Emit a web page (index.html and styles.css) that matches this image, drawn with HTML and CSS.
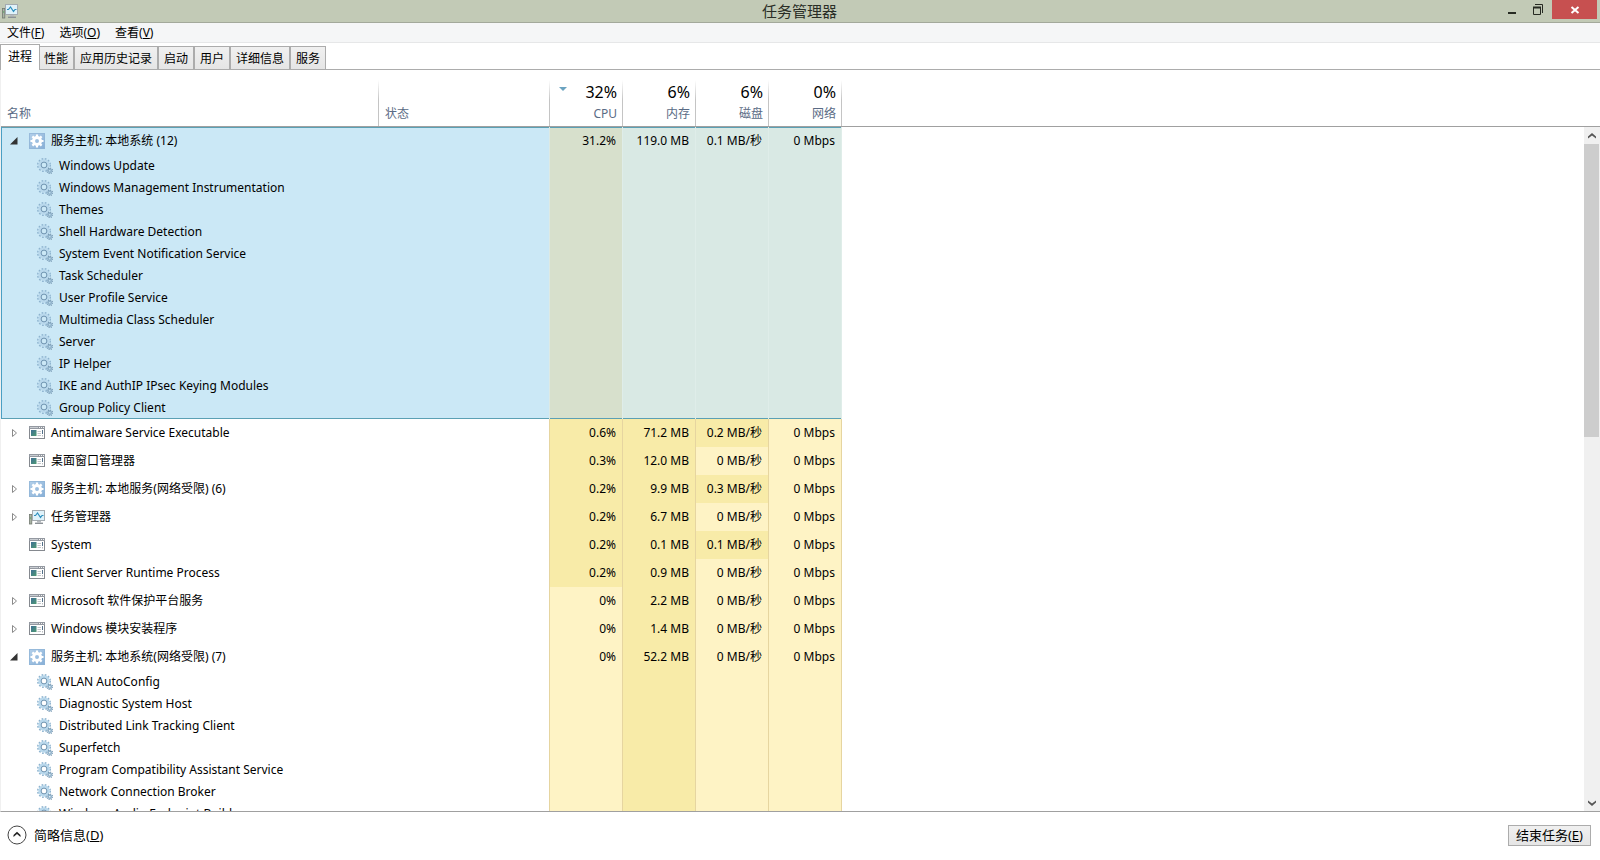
FILE: index.html
```html
<!DOCTYPE html>
<html lang="zh-CN">
<head>
<meta charset="utf-8">
<title>任务管理器</title>
<link rel="stylesheet" href="styles.css">
</head>
<body>
<svg class="defs" aria-hidden="true">
  <defs>
    <linearGradient id="blue" x1="0" y1="0" x2="1" y2="1"><stop offset="0" stop-color="#b3d0ea"/><stop offset="1" stop-color="#86aed6"/></linearGradient>
    <linearGradient id="pane" x1="0" y1="0" x2="1" y2="1"><stop offset="0" stop-color="#3f6f96"/><stop offset="1" stop-color="#4e9a72"/></linearGradient>
  </defs>
  <symbol id="host" viewBox="0 0 16 16">
    <rect width="16" height="16" fill="url(#blue)"/>
    <rect x=".5" y=".5" width="15" height="15" fill="none" stroke="#8fb3d6" stroke-opacity=".7"/>
    <circle cx="8" cy="8" r="3.500" fill="none" stroke="#fff" stroke-width="3"/>
    <path d="M8 1.500v3m0 7v3M1.500 8h3m7 0h3M3.400 3.400l2 2m5.200 5.200l2 2M12.600 3.400l-2 2m-5.200 5.200l-2 2" stroke="#fff" stroke-width="2.200"/>
  </symbol>
  <symbol id="gears" viewBox="0 0 16 16">
    <circle cx="7" cy="7" r="6.200" fill="none" stroke="#8db3cf" stroke-width="1.600" stroke-dasharray="1.700 1.550"/>
    <circle cx="7" cy="7" r="4.300" fill="none" stroke="#b9d8ec" stroke-width="2.800"/>
    <circle cx="7" cy="7" r="2.900" fill="none" stroke="#6f93b0" stroke-width="1"/>
    <circle cx="12.800" cy="12.800" r="1.500" fill="none" stroke="#8fb2cb" stroke-width="1.500"/>
    <circle cx="12.800" cy="12.800" r="2.700" fill="none" stroke="#7899b3" stroke-width="1.200" stroke-dasharray="1.100 1.020"/>
  </symbol>
  <symbol id="app" viewBox="0 0 16 16">
    <rect x=".5" y="1.500" width="15" height="12" fill="#fff" stroke="#85898f"/>
    <path d="M0 1h16v3H0z" fill="#9499a1"/>
    <path d="M1 2.500h8" stroke="#c9cdd2"/>
    <path d="M10 2.500h1m1 0h1m1 0h1" stroke="#f4f4f4"/>
    <rect x="2" y="5" width="5.500" height="6" fill="url(#pane)"/>
    <path d="M8.500 6.500h3.500m-3.500 2h3.500m-3.500 2h3.500" stroke="#c3c7cb"/>
    <path d="M13.500 5v4" stroke="#54718a"/><path d="M13.500 10v1.500" stroke="#b9bdc1"/>
  </symbol>
  <symbol id="monitor" viewBox="0 0 16 16">
    <rect x=".4" y="5.500" width="2.400" height="9.500" fill="#a9b3a4" stroke="#737b72" stroke-width=".8"/>
    <path d="M1 9h1.200" stroke="#4da35a"/>
    <rect x="3.500" y="1.500" width="12" height="10" fill="#dff2fa" stroke="#a4abb0"/>
    <path d="M5 6.500h1.500L8.500 4l3 4.500L13 6.500h1.500" fill="none" stroke="#2d8fbd" stroke-width="1.200"/>
    <path d="M8 12h4v1.500H8z" fill="#b6bbbf"/><path d="M6 14.300h8" stroke="#8b9196" stroke-width="1.400"/>
  </symbol>
</svg>

<div class="window">
  <header class="titlebar">
    <svg class="icon"><use href="#monitor"/></svg>
    <h1>任务管理器</h1>
    <div class="controls">
      <button class="ctl" type="button" aria-label="最小化"><svg width="12" height="12"><path d="M2 8h8v2H2z"/></svg></button>
      <button class="ctl" type="button" aria-label="还原"><svg width="12" height="12"><path d="M.5 3.500h7v7h-7z" fill="none" stroke="#262a22"/><path d="M0 2.500h8v2H0z"/><path d="M2 .5h7.500V9" fill="none" stroke="#262a22"/></svg></button>
      <button class="ctl close" type="button" aria-label="关闭"><svg width="10" height="10"><path d="M1.500 2l7 6m0-6l-7 6" stroke="#fff" stroke-width="2"/></svg></button>
    </div>
  </header>

  <nav class="menubar">
    <button type="button">文件(<u>F</u>)</button>
    <button type="button">选项(<u>O</u>)</button>
    <button type="button">查看(<u>V</u>)</button>
  </nav>

  <div class="tabs" role="tablist">
    <button type="button" role="tab" class="tab active" aria-selected="true">进程</button>
    <button type="button" role="tab" class="tab">性能</button>
    <button type="button" role="tab" class="tab">应用历史记录</button>
    <button type="button" role="tab" class="tab">启动</button>
    <button type="button" role="tab" class="tab">用户</button>
    <button type="button" role="tab" class="tab">详细信息</button>
    <button type="button" role="tab" class="tab">服务</button>
  </div>

  <main class="list">
    <div class="tablewrap">
    <table>
      <colgroup><col class="c-name"><col class="c-status"><col class="c-num"><col class="c-num"><col class="c-num"><col class="c-num"><col></colgroup>
      <thead>
        <tr>
          <th scope="col">名称</th><th scope="col">状态</th>
          <th scope="col"><svg class="sort" width="8" height="4"><path d="M0 0h8L4 4z" fill="#6ba3c0"/></svg><b>32%</b>CPU</th>
          <th scope="col"><b>6%</b>内存</th><th scope="col"><b>6%</b>磁盘</th><th scope="col"><b>0%</b>网络</th><td></td>
        </tr>
      </thead>
      <tbody class="selected">
        <tr class="proc"><td><div class="name"><svg class="arrow"><path d="M7.500 0v7.500H0z" fill="#333"/></svg><svg class="icon"><use href="#host"/></svg>服务主机: 本地系统 (12)</div></td><td></td><td>31.2%</td><td>119.0 MB</td><td>0.1 MB/秒</td><td>0 Mbps</td><td></td></tr>
        <tr class="svc"><td><div class="name"><svg class="icon"><use href="#gears"/></svg>Windows Update</div></td><td></td><td></td><td></td><td></td><td></td><td></td></tr>
        <tr class="svc"><td><div class="name"><svg class="icon"><use href="#gears"/></svg>Windows Management Instrumentation</div></td><td></td><td></td><td></td><td></td><td></td><td></td></tr>
        <tr class="svc"><td><div class="name"><svg class="icon"><use href="#gears"/></svg>Themes</div></td><td></td><td></td><td></td><td></td><td></td><td></td></tr>
        <tr class="svc"><td><div class="name"><svg class="icon"><use href="#gears"/></svg>Shell Hardware Detection</div></td><td></td><td></td><td></td><td></td><td></td><td></td></tr>
        <tr class="svc"><td><div class="name"><svg class="icon"><use href="#gears"/></svg>System Event Notification Service</div></td><td></td><td></td><td></td><td></td><td></td><td></td></tr>
        <tr class="svc"><td><div class="name"><svg class="icon"><use href="#gears"/></svg>Task Scheduler</div></td><td></td><td></td><td></td><td></td><td></td><td></td></tr>
        <tr class="svc"><td><div class="name"><svg class="icon"><use href="#gears"/></svg>User Profile Service</div></td><td></td><td></td><td></td><td></td><td></td><td></td></tr>
        <tr class="svc"><td><div class="name"><svg class="icon"><use href="#gears"/></svg>Multimedia Class Scheduler</div></td><td></td><td></td><td></td><td></td><td></td><td></td></tr>
        <tr class="svc"><td><div class="name"><svg class="icon"><use href="#gears"/></svg>Server</div></td><td></td><td></td><td></td><td></td><td></td><td></td></tr>
        <tr class="svc"><td><div class="name"><svg class="icon"><use href="#gears"/></svg>IP Helper</div></td><td></td><td></td><td></td><td></td><td></td><td></td></tr>
        <tr class="svc"><td><div class="name"><svg class="icon"><use href="#gears"/></svg>IKE and AuthIP IPsec Keying Modules</div></td><td></td><td></td><td></td><td></td><td></td><td></td></tr>
        <tr class="svc"><td><div class="name"><svg class="icon"><use href="#gears"/></svg>Group Policy Client</div></td><td></td><td></td><td></td><td></td><td></td><td></td></tr>
      </tbody>
      <tbody>
        <tr class="proc"><td><div class="name"><svg class="arrow"><path d="M2.500 .5v7L6.500 4z" fill="#fff" stroke="#8a8a8a"/></svg><svg class="icon"><use href="#app"/></svg>Antimalware Service Executable</div></td><td></td><td class="hot">0.6%</td><td>71.2 MB</td><td class="hot">0.2 MB/秒</td><td>0 Mbps</td><td></td></tr>
        <tr class="proc"><td><div class="name"><svg class="arrow"></svg><svg class="icon"><use href="#app"/></svg>桌面窗口管理器</div></td><td></td><td class="hot">0.3%</td><td>12.0 MB</td><td>0 MB/秒</td><td>0 Mbps</td><td></td></tr>
        <tr class="proc"><td><div class="name"><svg class="arrow"><path d="M2.500 .5v7L6.500 4z" fill="#fff" stroke="#8a8a8a"/></svg><svg class="icon"><use href="#host"/></svg>服务主机: 本地服务(网络受限) (6)</div></td><td></td><td class="hot">0.2%</td><td>9.9 MB</td><td class="hot">0.3 MB/秒</td><td>0 Mbps</td><td></td></tr>
        <tr class="proc"><td><div class="name"><svg class="arrow"><path d="M2.500 .5v7L6.500 4z" fill="#fff" stroke="#8a8a8a"/></svg><svg class="icon"><use href="#monitor"/></svg>任务管理器</div></td><td></td><td class="hot">0.2%</td><td>6.7 MB</td><td>0 MB/秒</td><td>0 Mbps</td><td></td></tr>
        <tr class="proc"><td><div class="name"><svg class="arrow"></svg><svg class="icon"><use href="#app"/></svg>System</div></td><td></td><td class="hot">0.2%</td><td>0.1 MB</td><td class="hot">0.1 MB/秒</td><td>0 Mbps</td><td></td></tr>
        <tr class="proc"><td><div class="name"><svg class="arrow"></svg><svg class="icon"><use href="#app"/></svg>Client Server Runtime Process</div></td><td></td><td class="hot">0.2%</td><td>0.9 MB</td><td>0 MB/秒</td><td>0 Mbps</td><td></td></tr>
        <tr class="proc"><td><div class="name"><svg class="arrow"><path d="M2.500 .5v7L6.500 4z" fill="#fff" stroke="#8a8a8a"/></svg><svg class="icon"><use href="#app"/></svg>Microsoft 软件保护平台服务</div></td><td></td><td>0%</td><td>2.2 MB</td><td>0 MB/秒</td><td>0 Mbps</td><td></td></tr>
        <tr class="proc"><td><div class="name"><svg class="arrow"><path d="M2.500 .5v7L6.500 4z" fill="#fff" stroke="#8a8a8a"/></svg><svg class="icon"><use href="#app"/></svg>Windows 模块安装程序</div></td><td></td><td>0%</td><td>1.4 MB</td><td>0 MB/秒</td><td>0 Mbps</td><td></td></tr>
        <tr class="proc"><td><div class="name"><svg class="arrow"><path d="M7.500 0v7.500H0z" fill="#333"/></svg><svg class="icon"><use href="#host"/></svg>服务主机: 本地系统(网络受限) (7)</div></td><td></td><td>0%</td><td>52.2 MB</td><td>0 MB/秒</td><td>0 Mbps</td><td></td></tr>
        <tr class="svc"><td><div class="name"><svg class="icon"><use href="#gears"/></svg>WLAN AutoConfig</div></td><td></td><td></td><td></td><td></td><td></td><td></td></tr>
        <tr class="svc"><td><div class="name"><svg class="icon"><use href="#gears"/></svg>Diagnostic System Host</div></td><td></td><td></td><td></td><td></td><td></td><td></td></tr>
        <tr class="svc"><td><div class="name"><svg class="icon"><use href="#gears"/></svg>Distributed Link Tracking Client</div></td><td></td><td></td><td></td><td></td><td></td><td></td></tr>
        <tr class="svc"><td><div class="name"><svg class="icon"><use href="#gears"/></svg>Superfetch</div></td><td></td><td></td><td></td><td></td><td></td><td></td></tr>
        <tr class="svc"><td><div class="name"><svg class="icon"><use href="#gears"/></svg>Program Compatibility Assistant Service</div></td><td></td><td></td><td></td><td></td><td></td><td></td></tr>
        <tr class="svc"><td><div class="name"><svg class="icon"><use href="#gears"/></svg>Network Connection Broker</div></td><td></td><td></td><td></td><td></td><td></td><td></td></tr>
        <tr class="svc"><td><div class="name"><svg class="icon"><use href="#gears"/></svg>Windows Audio Endpoint Builder</div></td><td></td><td></td><td></td><td></td><td></td><td></td></tr>
      </tbody>
    </table>
    </div>
    <div class="scrollbar">
      <button type="button" aria-label="向上滚动"><svg width="8" height="6"><path d="M0 5.500V3.500L4 0l4 3.500v2L4 2.500z" fill="#555"/></svg></button>
      <div class="track"><div class="thumb"></div></div>
      <button type="button" aria-label="向下滚动"><svg width="8" height="6"><path d="M0 .5v2L4 6l4-3.500v-2L4 3.500z" fill="#555"/></svg></button>
    </div>
  </main>

  <footer class="footer">
    <button class="fewer" type="button"><svg width="20" height="20"><circle cx="10" cy="10" r="9" fill="#fff" stroke="#444"/><path d="M6.500 12V10L10 6.800l3.500 3.200v2L10 9z" fill="#222"/></svg><span>简略信息(<u>D</u>)</span></button>
    <button class="end" type="button">结束任务(<u>E</u>)</button>
  </footer>
</div>
</body>
</html>
```

FILE: styles.css
```css
* { box-sizing: border-box; }

body {
  margin: 0;
  font-family: "Noto Sans", "Noto Sans CJK SC", sans-serif;
  font-size: 12px;
  line-height: 18px;
  color: #000;
  background: #fff;
}

button {
  margin: 0;
  padding: 0;
  border: 0;
  background: none;
  font: inherit;
  color: inherit;
  white-space: nowrap;
}

svg { display: block; flex: none; }
.defs { position: absolute; width: 0; height: 0; }
.icon { width: 16px; height: 16px; }

.window {
  display: flex;
  flex-direction: column;
  height: 100vh;
  overflow: hidden;
}

/* Title bar */
.titlebar {
  display: grid;
  grid-template-columns: 1fr auto 1fr;
  align-items: center;
  flex: none;
  height: 23px;
  padding: 0 3px 0 2px;
  background: #c2cab6;
  border-bottom: 1px solid #a3a99b;
}
.titlebar h1 {
  margin: 0;
  font-size: 15px;
  line-height: 22px;
  font-weight: 400;
  color: #2a2e26;
}
.controls {
  display: flex;
  align-self: start;
  justify-content: flex-end;
}
.ctl {
  display: flex;
  align-items: center;
  justify-content: center;
  width: 27px;
  height: 19px;
}
.ctl path { fill: #262a22; }
.ctl path[fill="none"] { fill: none; }
.ctl.close { width: 45px; background: #c75050; }

/* Menu */
.menubar {
  display: flex;
  align-items: center;
  gap: 15px;
  flex: none;
  height: 20px;
  padding: 0 7px;
  background: #f5f6f7;
  border-bottom: 1px solid #e6e7e8;
}

/* Tabs */
.tabs {
  display: flex;
  align-items: flex-end;
  flex: none;
  height: 27px;
  border-bottom: 1px solid #acacac;
}
.tab {
  height: 23px;
  padding: 2px 5px 0;
  border: 1px solid #acacac;
  border-bottom: 0;
  background: linear-gradient(#f0f0f0, #e5e5e5);
  line-height: 20px;
}
.tab.active {
  z-index: 1;
  height: 26px;
  margin-bottom: -1px;
  margin-right: -2px;
  padding: 0 7px 2px;
  background: #fff;
}

/* Process list */
.list {
  display: grid;
  grid-template-columns: 1fr 16px;
  grid-template-rows: 57px 1fr;
  flex: 1;
  min-height: 0;
  overflow: hidden;
  border-left: 1px solid #f0f0f0;
  border-bottom: 1px solid #a0a0a0;
}
.tablewrap {
  grid-area: 1 / 1 / 3 / 3;
  min-height: 0;
  overflow: hidden;
}
table {
  width: 100%;
  table-layout: fixed;
  border-collapse: separate;
  border-spacing: 0;
}
.c-name { width: 378px; }
.c-status { width: 171px; }
.c-num { width: 73px; }

th, td { padding: 0; font-weight: 400; white-space: nowrap; }
thead th, thead td {
  height: 57px;
  padding: 0 6px 2px;
  border-bottom: 1px solid #a0a0a0;
  text-align: left;
  vertical-align: bottom;
  color: #5a6b85;
  line-height: 20px;
}
thead th {
  background: linear-gradient(transparent 10px, #c4c4c4 30px) right / 1px 100% no-repeat;
}
thead th:nth-child(n+3) { position: relative; text-align: right; }
thead b {
  display: block;
  font-size: 16px;
  line-height: 24px;
  font-weight: 400;
  color: #000;
}
.sort { position: absolute; left: 9px; top: 17px; }

tbody td:nth-child(n+3) { padding-right: 6px; text-align: right; }
tbody td:nth-child(n+3):nth-child(-n+6) {
  background: #fef3c5;
  border-right: 1px solid #e6d5a0;
}
tbody td:nth-child(2) { border-right: 1px solid #e6d5a0; }
tbody td.hot.hot.hot { background: #f8eba8; }
tbody tr td:nth-child(4):nth-child(n+3):nth-child(-n+6) { background: #f8eba8; }
.proc td { height: 28px; }
.svc td { height: 22px; }

.name { display: flex; align-items: center; }
.name .arrow { width: 8px; height: 8px; margin: 0 11px 0 9px; }
.name .arrow + .icon { margin-right: 6px; }
.svc .icon { margin: 0 6px 0 36px; }

.selected tr td:nth-child(-n+2) { background: #cbe8f6; }
.selected tr td:nth-child(2) { border-right-color: #dce9e4; }
.selected tr td:nth-child(n+3):nth-child(-n+6):nth-child(n) {
  background: #d9e9e4;
  border-right-color: #dfede9;
}
.selected tr td:nth-child(3):nth-child(n+3):nth-child(-n+6) { background: #d7e0cc; }
.selected tr td:first-child { border-left: 1px solid #4a9fc4; }
.selected .name .arrow { margin-left: 8px; }
.selected .svc .icon { margin-left: 35px; }
.selected tr:first-child td:nth-child(-n+6) { box-shadow: inset 0 1px #5ba0b4; }
.selected tr:last-child td:nth-child(-n+6) { box-shadow: inset 0 -1px #5ba0b4; }

/* Scroll bar */
.scrollbar {
  grid-area: 2 / 2;
  display: flex;
  flex-direction: column;
  min-height: 0;
  background: #f0f0f0;
}
.scrollbar button {
  display: flex;
  align-items: center;
  justify-content: center;
  flex: none;
  height: 17px;
}
.track { flex: 1; min-height: 0; padding-right: 1px; }
.thumb { height: 45%; background: #cdcdcd; }

/* Footer */
.footer {
  display: flex;
  align-items: center;
  justify-content: space-between;
  flex: none;
  height: 48px;
  padding: 0 9px 2px 7px;
  font-size: 13px;
}
.fewer { display: flex; align-items: center; gap: 7px; }
.end {
  height: 21px;
  padding: 0 7px;
  border: 1px solid #acacac;
  background: linear-gradient(#f0f0f0, #e5e5e5);
  line-height: 18px;
}
```
